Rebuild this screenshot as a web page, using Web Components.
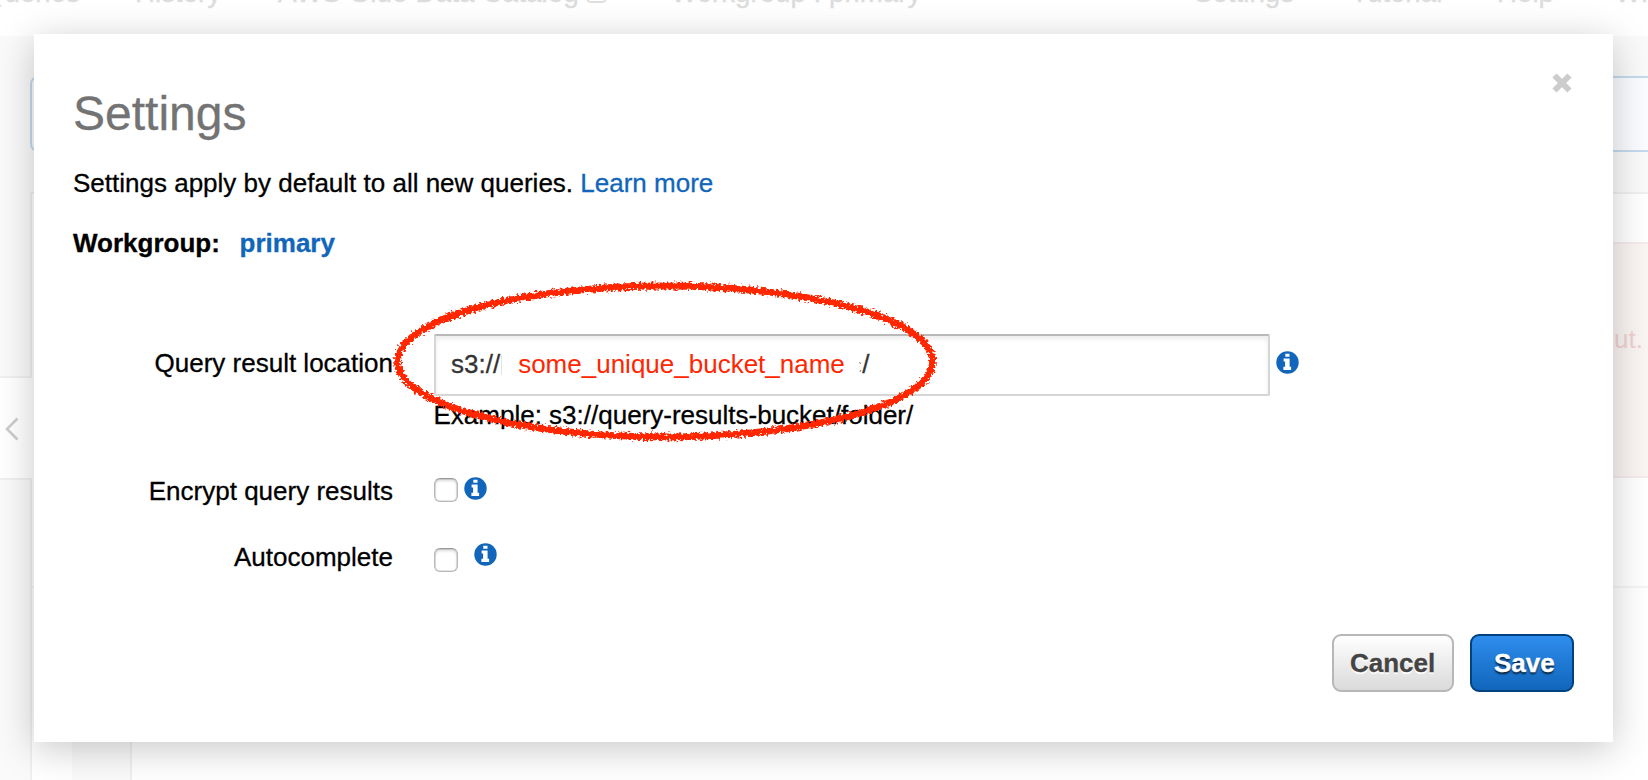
<!DOCTYPE html>
<html lang="en">
<head>
<meta charset="utf-8">
<title>Settings</title>
<style>
html,body{margin:0;height:100%;overflow:hidden;background:#fff;font-family:"Liberation Sans",Arial,sans-serif;font-size:26px;line-height:30px;color:#000}
</style>
</head>
<body>
<settings-page></settings-page>
<script>
const define = (name, html) => customElements.define(name, class extends HTMLElement {
  constructor() {
    super();
    const t = document.createElement('template');
    t.innerHTML = html;
    this.attachShadow({mode: 'open'}).append(t.content.cloneNode(true));
  }
});

define('info-icon', `<style>:host{display:block;width:23px;height:23px}svg{display:block}</style>
<svg width="23" height="23" viewBox="0 0 23 23"><circle cx="11.5" cy="11.5" r="11.2" fill="#1166bb"/><path fill="#fff" d="M9.3 2.7h4.2v3H9.3zM7.6 7.4h6v8.4h1.5v3.2H7.4v-3.2h1.7v-5.3H7.6z"/></svg>`);

define('check-box', `<style>:host{display:block;box-sizing:border-box;width:24px;height:24px;border:1.5px solid #b8b8b8;border-top-color:#999;border-radius:6px;background:#fff;box-shadow:inset 0 2px 3px rgba(0,0,0,.15),inset 0 0 0 .5px #ccc}</style>`);

define('aws-button', `<style>
:host{display:block;box-sizing:border-box;height:58px;border:2px solid #b7b7b7;border-radius:9px;padding:12px 17px 0 16px;font-weight:bold;line-height:30px;color:#444;text-shadow:0 2px 1px #fff;background:linear-gradient(#fff,#dadada)}
:host([primary]){border-color:#004280;padding:12px 17px 0 22px;color:#fff;text-shadow:0 2px 2px rgba(0,0,0,.75);background:linear-gradient(#2e8ded,#1166bb)}
</style><slot></slot>`);

define('form-row', `<style>:host{display:grid;grid-template-columns:320px 1fr;column-gap:41px;align-items:start}
.l{text-align:right;white-space:nowrap;padding-top:var(--label-top,0px)}</style>
<div class="l"><slot name="label"></slot></div><div><slot></slot></div>`);

define('location-field', `<style>:host{display:flex;align-items:center;box-sizing:border-box;width:836px;height:62px;border:2px solid #d6d6d6;border-top-color:#b9b9b9;border-radius:2px;padding:0 15px 2px;background:#fff;box-shadow:inset 0 3px 5px rgba(0,0,0,.08);color:#333;white-space:nowrap}
.mark{width:1px;height:20px;background:#e3e3e3;margin:2px 16px 0 1px}
.name{color:#ff2600;width:326px;margin-right:15px;-webkit-text-stroke:0}</style>
<span>s3://</span><i class="mark"></i><span class="name">some_unique_bucket_name</span>
<svg width="3" height="20" viewBox="0 0 3 20"><path d="M.6 8l1 2M.8 18l1.2-2" stroke="#777" fill="none"/></svg><span>/</span>`);

define('brush-ellipse', `<style>:host{display:block;position:absolute;left:350px;top:236px;width:562px;height:182px;pointer-events:none}svg{display:block}</style>
<svg width="562" height="182" viewBox="0 0 562 182"><defs><filter id="b" filterUnits="userSpaceOnUse" x="0" y="0" width="562" height="182"><feTurbulence type="fractalNoise" baseFrequency=".4" numOctaves="2" seed="4"/><feDisplacementMap in="SourceGraphic" scale="7.500" xChannelSelector="R" yChannelSelector="G"/></filter></defs>
<ellipse cx="281" cy="91.500" rx="267.500" ry="75.500" fill="none" stroke="#ff2600" stroke-width="6.800" filter="url(#b)"/></svg>`);

define('settings-dialog', `<style>
:host{display:block;position:absolute;left:34px;top:34px;box-sizing:border-box;width:1579px;height:708px;padding:52px 39px 0;background:#fff;box-shadow:0 7px 36px rgba(0,0,0,.22);-webkit-text-stroke:.3px}
header{display:flex;justify-content:space-between}
h1{margin:0;font-weight:normal;font-size:48px;line-height:56px;color:#737373}
header svg{margin:-13px 2px 0 0}
p{margin:26px 0 30px}
a{color:#1166bb}
.wg{font-weight:bold}.wg a{margin-left:12.500px}
.loc{display:flex;gap:6px}.loc info-icon{margin-top:17px}
.r1{--label-top:14px;margin-top:76px}
.ex{margin:4px 0 0 -.5px}
.r2{margin-top:46px}.r3{margin-top:36px}
.c{display:flex}
footer{display:flex;justify-content:flex-end;gap:16px;margin-top:62px}
</style>
<header><h1>Settings</h1><svg width="20" height="20" viewBox="0 0 20 20"><path d="M2.500 2.500l15 15M17.500 2.500L2.500 17.500" stroke="#ccc" stroke-width="6"/></svg></header>
<p>Settings apply by default to all new queries. <a>Learn more</a></p>
<div class="wg">Workgroup: <a>primary</a></div>
<form-row class="r1"><span slot="label">Query result location</span><div class="loc"><location-field></location-field><info-icon></info-icon></div><div class="ex">Example: s3://query-results-bucket/folder/</div></form-row>
<form-row class="r2"><span slot="label">Encrypt query results</span><div class="c"><check-box style="margin-top:2px"></check-box><info-icon style="margin:1px 0 0 6px"></info-icon></div></form-row>
<form-row class="r3"><span slot="label">Autocomplete</span><div class="c"><check-box style="margin-top:6px"></check-box><info-icon style="margin:1px 0 0 16px"></info-icon></div></form-row>
<footer><aws-button style="width:122px">Cancel</aws-button><aws-button primary style="width:104px">Save</aws-button></footer>
<brush-ellipse></brush-ellipse>`);

define('nav-bar', `<style>:host{display:grid;grid-template-columns:152px 143px 393px 523px 157px 146px 118px 120px;margin-left:-17px;height:36px;overflow:hidden;font-size:27.700px;line-height:30px;color:#dcdcdc;white-space:nowrap;-webkit-text-stroke:.3px}
span{margin-top:-22px}svg{vertical-align:-1px;margin-left:7px}</style>
<span>Queries</span><span>History</span><span style="font-size:28px">AWS Glue Data Catalog<svg width="21" height="21" viewBox="0 0 21 21"><rect x="1" y="1" width="19" height="19" rx="4" fill="none" stroke="#dedede" stroke-width="2"/></svg></span><span>Workgroup : primary</span><span>Settings</span><span>Tutorial</span><span>Help</span><span>What's new</span>`);

define('query-backdrop', `<style>
:host{display:flex;flex-direction:column;height:744px;background:#fafafa}
.notice{box-sizing:border-box;height:76px;margin:40px -20px 40px 30px;border:2px solid #c5daee;border-radius:8px;background:#fafcff}
.main{flex:1;display:grid;grid-template-columns:32px 1fr}
.side{display:flex;flex-direction:column}
.side div{box-sizing:border-box;border-right:2px solid #f0f0f0}
.side .tab{height:104px;border:solid #f0f0f0;border-width:2px 0;background:#fff;padding:39px 0 0 5px}
svg{display:block}
.work{border-top:2px solid #f0f0f0;background:#fff;display:flex;flex-direction:column}
.err{box-sizing:border-box;margin:48px 0 0 20px;height:236px;border:solid #f5ecec;border-width:2px 0;background:#faf4f3;color:#efd2d2;text-align:right;padding:80px 5px 0 0}
.gap{height:108px;border-bottom:2px solid #f5f5f5}
.editor{flex:1;display:flex}
.editor i{margin-left:40px;width:58px;background:#fafafa;border-right:2px solid #f0f0f0}
</style>
<div class="notice"></div>
<div class="main"><div class="side"><div style="height:184px"></div><div class="tab"><svg width="14" height="24" viewBox="0 0 14 24"><path d="M12.500 1.500L2 12l10.500 10.500" fill="none" stroke="#ccc" stroke-width="2.600"/></svg></div><div style="flex:1"></div></div>
<div class="work"><div class="err">ut.</div><div class="gap"></div><div class="editor"><i></i></div></div></div>`);

define('settings-page', `<style>:host{display:block;position:relative;width:1648px;height:780px;overflow:hidden}</style>
<nav-bar></nav-bar><query-backdrop></query-backdrop><settings-dialog></settings-dialog>`);
</script>
</body>
</html>
